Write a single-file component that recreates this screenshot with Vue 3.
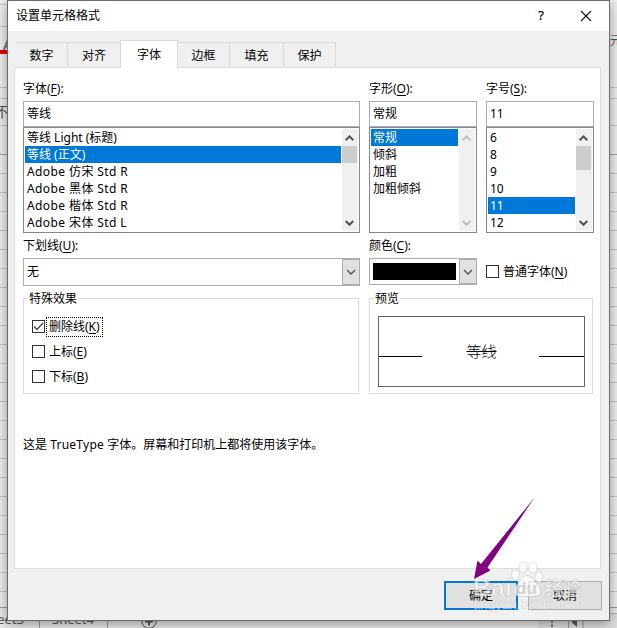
<script setup>
const tabs = [
  { t: '数字', c: 'w1' }, { t: '对齐', c: 'w2' }, { t: '字体', c: 'active' },
  { t: '边框', c: 'w3' }, { t: '填充', c: 'w4' }, { t: '保护', c: 'w5' },
]
const columns = [
  { label: '字体', key: 'F', value: '等线', sel: 1, thumb: 'short', items: ['等线 Light (标题)', '等线 (正文)', 'Adobe 仿宋 Std R', 'Adobe 黑体 Std R', 'Adobe 楷体 Std R', 'Adobe 宋体 Std L'] },
  { label: '字形', key: 'O', value: '常规', sel: 0, thumb: '', items: ['常规', '倾斜', '加粗', '加粗倾斜'] },
  { label: '字号', key: 'S', value: '11', sel: 4, thumb: 'long', items: ['6', '8', '9', '10', '11', '12'] },
]
const effects = [
  { t: '删除线', k: 'K', on: true }, { t: '上标', k: 'E', on: false }, { t: '下标', k: 'B', on: false },
]
const rows = Array.from({ length: 24 }, (_, i) => 154.5 + i * 19)
</script>

<template>
  <div class="desktop">
    <svg class="sheet" width="617" height="628">
      <rect width="617" height="628" fill="#f0f0f0" />
      <path d="M0 4.5H8M0 26.5H8M0 87.5H617M0 98.5H617M0 125.5H617" stroke="#c6c6c6" />
      <path v-for="(y, i) in rows" :key="i" :d="`M0 ${y}H617`" :stroke="i ? '#c4c4c4' : '#a0a0a0'" />
      <rect y="608" width="617" height="20" fill="#ececec" />
      <path d="M0 607.5H617" stroke="#9b9b9b" />
      <path d="M609 613.5H617" stroke="#b5b5b5" />
      <path d="M39.5 608V628M107.5 608V628" stroke="#9b9b9b" />
      <text x="-18" y="624" class="sheet-name">Sheet3</text>
      <text x="52" y="624" class="sheet-name">Sheet4</text>
      <circle cx="149" cy="621" r="7.2" fill="none" stroke="#777" stroke-width="1.3" />
      <path d="M145 621.5H153M149 617.5V625.5" stroke="#555" stroke-width="2" />
      <rect x="538" y="614" width="79" height="14" fill="#e0e0e0" />
      <path d="M552 620.5V623M552 624.5V627" stroke="#777" stroke-width="2" />
      <path d="M568.5 614V628M583 614V628" stroke="#999" />
      <path d="M577 617V627L571.5 622Z" fill="#555" />
      <text x="3" y="50" class="side-text">A</text>
      <rect y="50" width="8" height="4" fill="#f00000" />
      <text x="-5" y="117" class="side-text">不</text>
      <text x="598" y="45" class="side-text small">单元</text>
    </svg>

    <section class="dialog">
      <header>
        <span class="title">设置单元格格式</span>
        <span class="help">?</span>
        <svg class="close" width="12" height="12"><path d="M1 1L11 11M11 1L1 11" stroke="#111" stroke-width="1.1" /></svg>
      </header>

      <nav>
        <span v-for="tab in tabs" :key="tab.t" :class="['tab', tab.c]">{{ tab.t }}</span>
      </nav>

      <main>
        <div class="columns">
          <div v-for="c in columns" :key="c.key" class="column">
            <label>{{ c.label }}(<u>{{ c.key }}</u>):</label>
            <div class="input">{{ c.value }}</div>
            <div class="list">
              <ul>
                <li v-for="(it, i) in c.items" :key="it" :class="{ selected: i === c.sel, wide: it.startsWith('Adobe') }">{{ it }}</li>
              </ul>
              <div :class="['scroll', { disabled: !c.thumb }]">
                <svg width="15" height="17"><path d="M3.7 11.2L7.5 7.4L11.3 11.2" /></svg>
                <i :class="['thumb', c.thumb]"></i>
                <svg width="15" height="17"><path d="M3.7 7L7.5 10.8L11.3 7" /></svg>
              </div>
            </div>
          </div>
        </div>

        <div class="columns second">
          <div class="column">
            <label>下划线(<u>U</u>):</label>
            <div class="combo"><span class="val">无</span><span class="drop"><svg width="10" height="6"><path d="M1 1L5 5L9 1" /></svg></span></div>
          </div>
          <div class="column">
            <label>颜色(<u>C</u>):</label>
            <div class="combo color"><span class="swatch"></span><span class="drop"><svg width="10" height="6"><path d="M1 1L5 5L9 1" /></svg></span></div>
          </div>
          <div class="column normal">
            <span class="box"></span><span class="check-text">普通字体(<u>N</u>)</span>
          </div>
        </div>

        <div class="groups">
          <div class="group effects">
            <span class="legend">特殊效果</span>
            <div v-for="e in effects" :key="e.k" class="check">
              <span class="box"><svg v-if="e.on" width="11" height="11"><path d="M1 5.5L4 8.5L10 2" fill="none" stroke="#444" stroke-width="1.3" /></svg></span>
              <span :class="['check-text', { focus: e.on }]">{{ e.t }}(<u>{{ e.k }}</u>)</span>
            </div>
          </div>
          <div class="group preview">
            <span class="legend">预览</span>
            <div class="sample">
              <i class="rule"></i><span class="sample-text">等线</span><i class="rule right"></i>
            </div>
          </div>
        </div>
        <p>这是 <span class="latin">TrueType</span> 字体。屏幕和打印机上都将使用该字体。</p>
      </main>

      <footer>
        <button class="ok">确定</button>
        <button>取消</button>
      </footer>
    </section>

    <svg class="overlay" width="617" height="628">
      <path d="M474 579L477.5 560.5L481 564L534.5 497.5L487.5 567.5L490.5 570.5Z" fill="#800080" />
      <g class="mark">
        <text x="473" y="595.5" class="brand" textLength="39" lengthAdjust="spacingAndGlyphs">Bai</text>
        <ellipse cx="515.5" cy="575" rx="3.8" ry="5.2" />
        <ellipse cx="523" cy="567" rx="4.2" ry="5.6" />
        <ellipse cx="533" cy="567.5" rx="4.2" ry="5.6" />
        <ellipse cx="538.8" cy="577" rx="4" ry="5.2" />
        <path d="M527 575.5C522 575.5 521 581 516.5 585C512 589 513 596 519 596.5H535C542 596 542 589 538 585C533.5 581 532 575.5 527 575.5Z" />
        <text x="544.5" y="595.5" class="cn" textLength="37">经验</text>
        <text x="474" y="609" class="url" textLength="109" lengthAdjust="spacingAndGlyphs">jingyan.baidu.com</text>
      </g>
      <text x="516" y="594" class="du">du</text>
    </svg>
  </div>
</template>

<style>
body { margin: 0; overflow: hidden; }
</style>

<style scoped>
.desktop { position: relative; width: 617px; height: 628px; overflow: hidden; font: 12px/17px "Noto Sans", "Noto Sans CJK SC", sans-serif; color: #000; }
.desktop * { box-sizing: border-box; }
.sheet { display: block; }
.sheet-name { font: 13px "Noto Sans", sans-serif; fill: #555; }
.side-text { font: 14px "Noto Sans", "Noto Sans CJK SC", sans-serif; fill: #555; }
.small { font-size: 12px; }
.dialog { position: absolute; left: 7px; top: 0; width: 603px; height: 621px; display: flex; flex-direction: column; background: #f0f0f0; border: 1px solid #6b6b6b; box-shadow: 0 3px 12px rgba(0, 0, 0, .4); }
header { height: 30px; flex: none; background: #fff; display: flex; align-items: center; padding: 0 17px 0 8px; }
.title { flex: 1; line-height: 17px; margin-top: -1px; }
.help { font-size: 13px; width: 8px; margin-right: 35px; margin-top: -2px; text-align: center; -webkit-text-stroke: .2px #000; }
.close { margin-top: -1px; }
nav { display: flex; align-items: flex-end; height: 36px; flex: none; padding-left: 8px; }
.tab { height: 25px; border-top: 1px solid #d9d9d9; border-right: 1px solid #d9d9d9; text-align: center; line-height: 26px; }
.w1 { width: 52px; }
.w2 { width: 52px; border-right: 0; }
.w3 { width: 52px; }
.w4 { width: 54px; }
.w5 { width: 52px; }
.tab.active { position: relative; height: 28px; width: 58px; margin-bottom: -1px; background: #fff; border-left: 1px solid #d9d9d9; line-height: 28px; }
main { height: 502px; flex: none; margin: 0 8px 0 6px; background: #fff; border: 1px solid #dcdcdc; padding: 12px 6px 0 8px; }
.columns { display: grid; grid-template-columns: 337px 108px 108px; gap: 9px; }
.column { display: flex; flex-direction: column; min-width: 0; }
label { display: block; height: 21px; line-height: 17px; white-space: nowrap; }
u { text-underline-offset: 2px; text-decoration-thickness: 1px; }
.input { height: 26px; border: 1px solid #abadb3; padding-left: 3px; line-height: 23px; }
.list { height: 106px; border: 1px solid #828790; padding: 1px; display: flex; }
ul { list-style: none; margin: 0; padding: 0; flex: 1; }
li { height: 17px; line-height: 17px; padding-left: 2px; white-space: nowrap; margin-right: 1px; }
.wide { letter-spacing: .4px; }
.latin { letter-spacing: .25px; }
.selected { background: #0078d7; color: #fff; }
.scroll { width: 16px; padding-right: 1px; background: #f0f0f0; display: flex; flex-direction: column; }
.scroll svg { flex: none; display: block; }
.scroll path { fill: none; stroke: #505050; stroke-width: 2; }
.scroll.disabled path { stroke: #bfbfbf; }
.thumb { flex: none; background: #cdcdcd; margin-bottom: auto; }
.short { height: 17px; }
.long { height: 24px; }
.second { margin-top: 4px; }
.combo { height: 28px; border: 1px solid #abadb3; display: flex; line-height: 25px; }
.val { flex: 1; padding-left: 3px; }
.drop { width: 18px; border: 1px solid #adadad; background: #e1e1e1; display: flex; align-items: center; justify-content: center; margin-right: -1px; }
.drop path { fill: none; stroke: #505050; stroke-width: 1.3; }
.combo.color { height: 27px; }
.swatch { flex: 1; background: #000; margin: 4px 3px; }
.normal { flex-direction: row; align-items: center; padding-top: 20px; }
.box { width: 13px; height: 13px; flex: none; border: 1px solid #333; background: #fff; display: flex; }
.check-text { margin-left: 2px; padding: 1px 2px; white-space: nowrap; }
.groups { display: grid; grid-template-columns: 336px 224px; gap: 10px; margin-top: 12px; }
.group { height: 96px; border: 1px solid #dcdcdc; display: flex; flex-direction: column; align-items: flex-start; }
.legend { height: 17px; margin: -9px 0 0 4px; background: #fff; padding: 0 1px; }
.check { display: flex; align-items: center; height: 25px; padding-left: 8px; }
.legend + .check { margin-top: 7px; }
.focus { outline: 1px dotted #000; outline-offset: 0; height: 18px; padding-top: 0; }
.sample { width: 207px; height: 71px; border: 1px solid #646464; margin: 9px 0 0 8px; display: flex; align-items: center; justify-content: space-between; }
.rule { height: 1px; width: 43px; background: #000; margin-top: 9px; }
.right { width: 45px; }
.sample-text { font: 300 15px/20px "Noto Sans CJK SC", sans-serif; text-decoration: line-through; text-decoration-thickness: 1px; margin: -2px 0 0 2px; }
p { margin: 42px 0 0; white-space: nowrap; }
footer { display: flex; justify-content: flex-end; gap: 10px; padding: 12px 7px 0 0; }
button { width: 74px; height: 29px; margin: 0; padding: 0; border: 1px solid #adadad; background: #e1e1e1; color: #000; font: inherit; border-radius: 0; }
.ok { border: 2px solid #0078d7; }
.overlay { position: absolute; left: 0; top: 0; pointer-events: none; }
.mark { fill: #fff; fill-opacity: .65; stroke: #aaa; stroke-opacity: .5; stroke-width: .7; }
.brand { font: bold 24px "Liberation Sans", sans-serif; }
.cn { font: bold 19px "Noto Sans CJK SC", sans-serif; }
.url { font: 13px "Liberation Sans", sans-serif; stroke-width: .3; }
.du { font: bold 17px "Liberation Sans", sans-serif; fill: #d2d2d2; }
</style>
